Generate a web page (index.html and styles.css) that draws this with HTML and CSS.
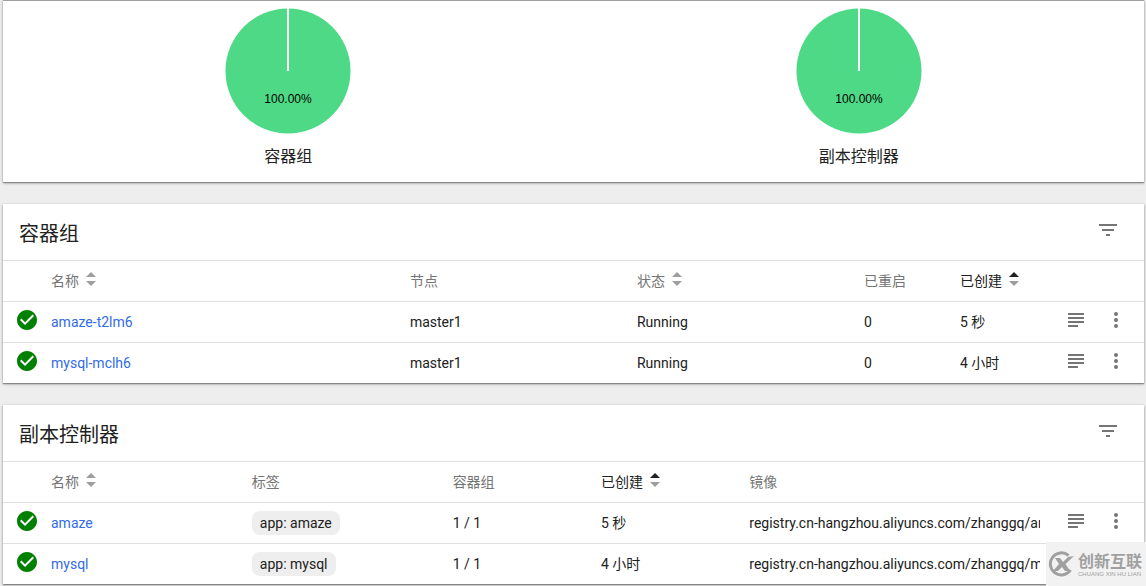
FILE: index.html
```html
<!DOCTYPE html>
<html lang="zh-CN">
<head>
<meta charset="utf-8">
<meta name="viewport" content="width=device-width, initial-scale=1">
<title>工作负载</title>
<link rel="stylesheet" href="styles.css">
</head>
<body>
<svg class="defs" aria-hidden="true">
  <symbol id="check" viewBox="0 0 24 24"><path d="M12 2C6.48 2 2 6.48 2 12s4.48 10 10 10 10-4.48 10-10S17.52 2 12 2zm-2 15l-5-5 1.41-1.41L10 14.17l7.59-7.59L19 8l-9 9z"/></symbol>
  <symbol id="filter" viewBox="0 0 24 24"><path d="M10 18h4v-2h-4v2zM3 6v2h18V6H3zm3 7h12v-2H6v2z"/></symbol>
  <symbol id="logs" viewBox="0 0 24 24"><path d="M4 5h16v2H4zM4 9h16v2H4zM4 13h16v2H4zM4 17h10v2H4z"/></symbol>
  <symbol id="more" viewBox="0 0 24 24"><circle cx="12" cy="6" r="2"/><circle cx="12" cy="12" r="2"/><circle cx="12" cy="18" r="2"/></symbol>
  <symbol id="sort" viewBox="0 0 12 16"><path class="up" d="M1 6L6 1l5 5z"/><path d="M1 10l5 5 5-5z"/></symbol>
</svg>
<main class="page">
  <section class="card charts">
    <figure class="chart">
      <svg class="pie" viewBox="0 0 126 126"><circle cx="63" cy="63" r="62.5"/><path d="M63 0v63"/><text x="63" y="95">100.00%</text></svg>
      <figcaption>容器组</figcaption>
    </figure>
    <figure class="chart">
      <svg class="pie" viewBox="0 0 126 126"><circle cx="63" cy="63" r="62.5"/><path d="M63 0v63"/><text x="63" y="95">100.00%</text></svg>
      <figcaption>副本控制器</figcaption>
    </figure>
  </section>

  <section class="card">
    <header class="card-head">
      <h2>容器组</h2>
      <button class="icon-button" type="button" aria-label="筛选"><svg class="icon"><use href="#filter"/></svg></button>
    </header>
    <table>
      <colgroup><col class="col-status"><col><col class="col-wide"><col class="col-wide"><col class="col-short"><col class="col-short"><col class="col-actions"></colgroup>
      <thead>
        <tr>
          <th></th>
          <th><button class="sort" type="button">名称<svg><use href="#sort"/></svg></button></th>
          <th>节点</th>
          <th><button class="sort" type="button">状态<svg><use href="#sort"/></svg></button></th>
          <th>已重启</th>
          <th><button class="sort sorted" type="button">已创建<svg><use href="#sort"/></svg></button></th>
          <th></th>
        </tr>
      </thead>
      <tbody>
        <tr>
          <td class="status"><svg class="icon"><use href="#check"/></svg></td>
          <td><a href="#">amaze-t2lm6</a></td>
          <td>master1</td>
          <td>Running</td>
          <td>0</td>
          <td>5 秒</td>
          <td class="actions"><div><button class="icon-button" type="button" aria-label="日志"><svg class="icon"><use href="#logs"/></svg></button><button class="icon-button" type="button" aria-label="更多"><svg class="icon"><use href="#more"/></svg></button></div></td>
        </tr>
        <tr>
          <td class="status"><svg class="icon"><use href="#check"/></svg></td>
          <td><a href="#">mysql-mclh6</a></td>
          <td>master1</td>
          <td>Running</td>
          <td>0</td>
          <td>4 小时</td>
          <td class="actions"><div><button class="icon-button" type="button" aria-label="日志"><svg class="icon"><use href="#logs"/></svg></button><button class="icon-button" type="button" aria-label="更多"><svg class="icon"><use href="#more"/></svg></button></div></td>
        </tr>
      </tbody>
    </table>
  </section>

  <section class="card">
    <header class="card-head">
      <h2>副本控制器</h2>
      <button class="icon-button" type="button" aria-label="筛选"><svg class="icon"><use href="#filter"/></svg></button>
    </header>
    <table>
      <colgroup><col class="col-status"><col class="col-name"><col class="col-name"><col class="col-mid"><col class="col-mid"><col><col class="col-actions"></colgroup>
      <thead>
        <tr>
          <th></th>
          <th><button class="sort" type="button">名称<svg><use href="#sort"/></svg></button></th>
          <th>标签</th>
          <th>容器组</th>
          <th><button class="sort sorted" type="button">已创建<svg><use href="#sort"/></svg></button></th>
          <th>镜像</th>
          <th></th>
        </tr>
      </thead>
      <tbody>
        <tr>
          <td class="status"><svg class="icon"><use href="#check"/></svg></td>
          <td><a href="#">amaze</a></td>
          <td><span class="chip">app: amaze</span></td>
          <td>1 / 1</td>
          <td>5 秒</td>
          <td><div class="clip">registry.cn-hangzhou.aliyuncs.com/zhanggq/amaze</div></td>
          <td class="actions"><div><button class="icon-button" type="button" aria-label="日志"><svg class="icon"><use href="#logs"/></svg></button><button class="icon-button" type="button" aria-label="更多"><svg class="icon"><use href="#more"/></svg></button></div></td>
        </tr>
        <tr>
          <td class="status"><svg class="icon"><use href="#check"/></svg></td>
          <td><a href="#">mysql</a></td>
          <td><span class="chip">app: mysql</span></td>
          <td>1 / 1</td>
          <td>4 小时</td>
          <td><div class="clip">registry.cn-hangzhou.aliyuncs.com/zhanggq/mysql</div></td>
          <td class="actions"><div><button class="icon-button" type="button" aria-label="日志"><svg class="icon"><use href="#logs"/></svg></button><button class="icon-button" type="button" aria-label="更多"><svg class="icon"><use href="#more"/></svg></button></div></td>
        </tr>
      </tbody>
    </table>
  </section>
</main>
<aside class="watermark">
  <svg viewBox="0 0 27 26"><path class="ring" d="M20.5 4.500A11 11 0 1 0 22.500 19"/><path class="cross" d="M7 7h5l3 4 5-5 6-1-8.500 8L22 20h-5l-3-4-4 4H5l6-7z"/></svg>
  <div class="brand"><strong>创新互联</strong><small>CHUANG XIN HU LIAN</small></div>
</aside>
</body>
</html>
```

FILE: styles.css
```css
* { box-sizing: border-box; }

body {
  margin: 0;
  background: #eee;
  color: #212121;
  font: 14px/20px Roboto, "Noto Sans CJK SC", sans-serif;
}

.defs { position: absolute; width: 0; height: 0; }

.page {
  display: flex;
  flex-direction: column;
  gap: 22px;
  padding: 0 2px 2px 3px;
}

.card {
  background: #fff;
  box-shadow: 0 1px 3px rgba(0, 0, 0, .3), 0 1px 1px rgba(0, 0, 0, .3);
}

.charts {
  display: flex;
  padding: 7px 0 13px;
  border-top: 1px solid #a0a0a0;
}

.chart {
  flex: 1;
  display: flex;
  flex-direction: column;
  align-items: center;
  gap: 11px;
  margin: 0;
}

.chart figcaption { font-size: 16px; line-height: 24px; }

.pie { width: 126px; height: 126px; }
.pie circle { fill: #4dd985; }
.pie path { stroke: #fff; stroke-width: 2; }
.pie text { font-family: "Liberation Sans", sans-serif; font-size: 12px; text-anchor: middle; fill: #000; }

.card-head {
  display: flex;
  align-items: center;
  justify-content: space-between;
  height: 56px;
  padding: 0 24px 0 16px;
}

.card-head h2 { margin: 0; padding-top: 4px; font-size: 20px; font-weight: 400; line-height: 28px; }
.card-head .icon-button { padding-bottom: 4px; }

table {
  width: 100%;
  table-layout: fixed;
  border-collapse: separate;
  border-spacing: 0;
}

.col-status { width: 48px; }
.col-wide { width: 19.9%; }
.col-short { width: 96px; }
.col-name { width: 17.6%; }
.col-mid { width: 13%; }
.col-actions { width: 88px; }

th, td {
  height: 41px;
  padding: 0;
  border-top: 1px solid #e0e0e0;
  text-align: left;
  vertical-align: middle;
  white-space: nowrap;
}

th { color: #757575; font-weight: 400; }

a { color: #326de6; text-decoration: none; }

button {
  padding: 0;
  border: 0;
  background: none;
  color: inherit;
  font: inherit;
  cursor: pointer;
}

.icon { display: block; width: 24px; height: 24px; fill: #757575; }

.status { padding: 0 0 4px 12px; }
.status .icon { fill: #008000; }

.actions { padding: 0 16px 4px 8px; }
.actions div { display: flex; gap: 16px; }

.sort { display: flex; align-items: center; gap: 6px; }
.sort svg { width: 12px; height: 20px; padding-bottom: 4px; fill: #9e9e9e; }
.sorted { color: #212121; }
.up { fill: var(--up, inherit); }
.sorted { --up: #212121; }

.chip {
  display: inline-block;
  padding: 2px 8px;
  border-radius: 8px;
  background: #eee;
}

.clip { margin-right: 16px; overflow: hidden; }

.watermark {
  position: fixed;
  right: 0;
  bottom: 0;
  display: flex;
  align-items: center;
  gap: 3px;
  width: 100px;
  height: 44px;
  padding-left: 2px;
  background: #f2f2f2;
  color: #a0a0a0;
}

.watermark svg { flex: none; width: 27px; height: 26px; }
.ring { fill: none; stroke: #a0a0a0; stroke-width: 3; }
.cross { fill: #a0a0a0; }
.brand { display: flex; flex-direction: column; padding-top: 2px; white-space: nowrap; }
.brand strong { font-size: 16px; line-height: 18px; }
.brand small { font: 6px/6px "Liberation Sans", sans-serif; }
```
